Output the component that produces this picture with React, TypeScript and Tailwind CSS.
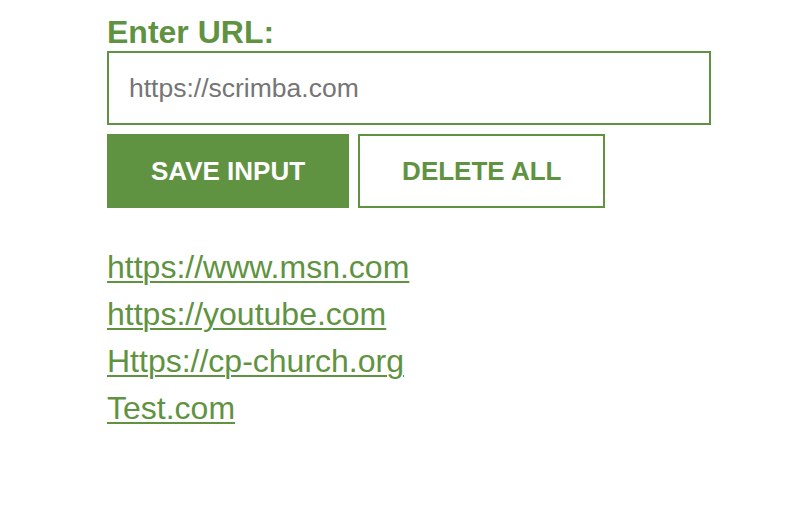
import React, { useState } from "react";

const GREEN = "#5f9341";

const initialLeads = [
  "https://www.msn.com",
  "https://youtube.com",
  "Https://cp-church.org",
  "Test.com",
];

const App = () => {
  const [value, setValue] = useState("");
  const [leads, setLeads] = useState<string[]>(initialLeads);

  const saveInput = () => {
    if (!value.trim()) return;
    setLeads([...leads, value.trim()]);
    setValue("");
  };

  return (
    <div
      className="min-h-screen bg-white pl-[107px] pt-[14px]"
      style={{ fontFamily: '"Liberation Sans", Arial, sans-serif' }}
    >
      <label htmlFor="input-el" className="block text-[32px] leading-[36px] font-bold text-[#5f9341]">
        Enter URL:
      </label>

      <input
        id="input-el"
        type="text"
        value={value}
        onChange={(e) => setValue(e.target.value)}
        placeholder="https://scrimba.com"
        className="mt-px block h-[74px] w-[604px] border-2 border-[#5f9341] bg-white pl-[20px] text-[26.5px] text-[#333] outline-none placeholder:text-[#757575]"
      />

      <div className="mt-[9px] flex gap-[9px]">
        <button
          onClick={saveInput}
          className="h-[74px] border-2 border-[#5f9341] bg-[#5f9341] px-[42px] text-[26px] font-bold text-white"
        >
          SAVE INPUT
        </button>
        <button
          onClick={() => setLeads([])}
          className="h-[74px] border-2 border-[#5f9341] bg-white px-[42px] text-[26px] font-bold text-[#5f9341]"
        >
          DELETE ALL
        </button>
      </div>

      <ul className="mt-[36px]">
        {leads.map((lead) => (
          <li key={lead} className="text-[32px] leading-[47px]">
            <a
              href="#"
              className="underline decoration-2 underline-offset-[3px]"
              style={{ color: GREEN }}
            >
              {lead}
            </a>
          </li>
        ))}
      </ul>
    </div>
  );
};

export default App;
